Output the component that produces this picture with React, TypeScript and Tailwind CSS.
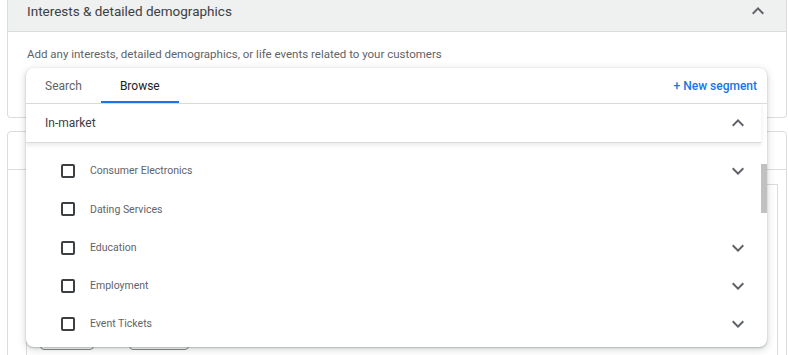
import React from 'react'

const ExpandMore = () => (
    <svg width="24" height="24" viewBox="0 0 24 24" className="shrink-0 fill-[#5f6368]">
        <path d="M16.59 8.59L12 13.17 7.41 8.59 6 10l6 6 6-6z" />
    </svg>
)

const ExpandLess = () => (
    <svg width="24" height="24" viewBox="0 0 24 24" className="shrink-0 fill-[#5f6368]">
        <path d="M12 8l-6 6 1.41 1.41L12 10.83l4.59 4.58L18 14z" />
    </svg>
)

const categories = [
    { name: 'Consumer Electronics', more: true },
    { name: 'Dating Services', more: false },
    { name: 'Education', more: true },
    { name: 'Employment', more: true },
    { name: 'Event Tickets', more: true },
]

export default function App() {
    return (
        <div className="relative w-[788px] h-[355px] overflow-hidden bg-white font-['Roboto',sans-serif]">
            {/* interests card */}
            <div className="ml-[7px] mr-px border-x border-b border-[#dadce0] rounded-b-[4px]">
                <div className="h-[32px] flex items-center justify-between pl-[19px] pr-[16px] pb-[9px] bg-[#eff0f0] border-b border-[#dadce0]">
                    <span className="text-[13.5px] text-[#3c4043] leading-[20px]">Interests &amp; detailed demographics</span>
                    <ExpandLess />
                </div>
                <div className="h-[85px] pl-[19px] pt-[14px]">
                    <p className="text-[11.5px] leading-[16px] text-[#5f6368]">
                        Add any interests, detailed demographics, or life events related to your customers
                    </p>
                </div>
            </div>

            {/* next card, mostly under the menu */}
            <div className="mt-[13px] ml-[7px] mr-px h-[240px] border border-[#dadce0] rounded-t-[4px]">
                <div className="h-[38px] border-b border-[#dadce0]" />
                <div className="mt-[14px] ml-[18px] mr-[8px] h-[200px] border border-[#dadce0] pl-[13px] pt-[134px] flex items-start">
                    <div className="w-[54px] h-[31px] border border-[#80868b] rounded-[4px]" />
                    <div className="ml-[35px] w-[60px] h-[31px] border border-[#80868b] rounded-[4px]" />
                    <div className="ml-[18px] mt-[25px] w-[13px] h-[2px] bg-[#1a73e8]" />
                </div>
            </div>

            {/* browse menu */}
            <div className="absolute left-[26px] top-[68px] w-[741px] h-[279px] bg-white rounded-[8px] overflow-hidden shadow-[0_1px_2px_rgba(60,64,67,0.3),0_2px_6px_2px_rgba(60,64,67,0.15)] flex flex-col">
                <div className="h-[36px] shrink-0 flex items-stretch justify-between border-b border-[#dadce0]">
                    <div className="flex">
                        <div className="px-[19px] pt-px flex items-center text-[12px] text-[#5f6368]">Search</div>
                        <div className="relative px-[19px] pt-px flex items-center text-[12px] text-[#202124]">
                            Browse
                            <div className="absolute left-0 right-0 bottom-0 h-[2px] bg-[#1a73e8]" />
                        </div>
                    </div>
                    <div className="pr-[10px] pt-px flex items-center text-[12px] font-medium text-[#1a73e8]">+ New segment</div>
                </div>
                <div className="flex flex-1 min-h-0">
                    <div className="flex-1 flex flex-col">
                        <div className="h-[39px] shrink-0 flex items-center justify-between pl-[19px] pr-[11px] border-b border-[#dadce0] shadow-[0_2px_4px_rgba(60,64,67,0.12)]">
                            <span className="text-[12px] text-[#3c4043]">In-market</span>
                            <ExpandLess />
                        </div>
                        <div className="pt-[9px]">
                            {categories.map((c) => (
                                <div key={c.name} className="h-[38.3px] flex items-center pl-[35px] pr-[11px]">
                                    <div className="w-[14px] h-[14px] border-2 border-[#3c4043] rounded-[2px] shrink-0" />
                                    <span className="ml-[15px] flex-1 text-[10.5px] text-[#5f6368]">{c.name}</span>
                                    {c.more && <ExpandMore />}
                                </div>
                            ))}
                        </div>
                    </div>
                    <div className="w-[6px] shrink-0">
                        <div className="mt-[60px] h-[49px] bg-[#c1c1c1]" />
                    </div>
                </div>
            </div>
        </div>
    )
}
